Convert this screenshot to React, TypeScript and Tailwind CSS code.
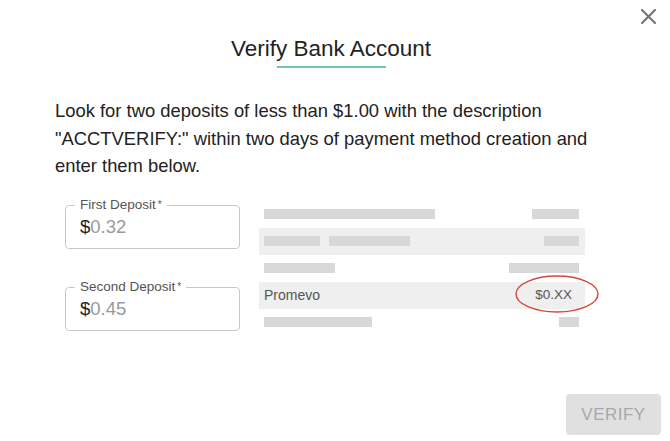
import React from 'react';

type Row = {
  band?: boolean;
  left: number[];
  right?: number;
  label?: string;
  amount?: string;
};

// statement preview rows, widths in px
const rows: Row[] = [
  { left: [171], right: 47 },
  { band: true, left: [56, 81], right: 35 },
  { left: [71], right: 70 },
  { band: true, left: [], label: 'Promevo', amount: '$0.XX' },
  { left: [108], right: 20 },
];

const DepositField = ({ label, value }: { label: string; value: string }) => (
  <div className="relative h-[44px] w-[175px] rounded-[4px] border border-[#c8c8c8] flex items-center pl-[14px]">
    <span className="absolute -top-[9px] left-[9px] bg-white px-[5px] text-[13.5px] leading-[16px] text-[#555]">
      {label}
      <span className="ml-[2px] align-top text-[10px]">*</span>
    </span>
    <span className="text-[18.5px] leading-[22px]">
      <span className="text-[#222]">$</span>
      <span className="text-[#9a9a9a]">{value}</span>
    </span>
  </div>
);

const StatementPreview = () => (
  <div className="w-[326px] flex flex-col">
    {rows.map((row, i) => (
      <div
        key={i}
        className={`relative h-[27px] flex items-center justify-between pl-[5px] pr-[6px] ${row.band ? 'bg-[#efefef]' : ''}`}
      >
        {row.label ? (
          <>
            <span className="text-[14px] text-[#555]">{row.label}</span>
            <span className="pr-[7px] text-[13.5px] text-[#555]">{row.amount}</span>
            <svg className="absolute left-[256px] -top-[7px]" width="84" height="38" viewBox="0 0 84 38">
              <ellipse cx="42" cy="19" rx="41" ry="18" fill="none" stroke="#d4483c" strokeWidth="1.4" />
            </svg>
          </>
        ) : (
          <>
            <div className="flex gap-[9px]">
              {row.left.map((w, j) => (
                <div key={j} className="h-[10px] bg-[#d8d8d8]" style={{ width: w }} />
              ))}
            </div>
            <div className="h-[10px] bg-[#d8d8d8]" style={{ width: row.right }} />
          </>
        )}
      </div>
    ))}
  </div>
);

export default function App() {
  return (
    <div className="relative w-[670px] h-[441px] bg-white flex flex-col font-['Liberation_Sans',Arial,sans-serif] text-[#222]">
      <button className="absolute top-[9px] left-[641px] w-[15px] h-[15px]">
        <svg width="15" height="15" viewBox="0 0 15 15">
          <path d="M1 1 L14 14 M14 1 L1 14" stroke="#777" strokeWidth="2.2" strokeLinecap="square" />
        </svg>
      </button>

      <div className="flex flex-col items-center pt-[36px] pr-[8px]">
        <h1 className="text-[22.5px] leading-[26px] text-[#222]">Verify Bank Account</h1>
        <div className="mt-[4px] h-[2px] w-[109px] bg-[#6fcba6]" />
      </div>

      <p className="mt-[29px] ml-[55px] w-[560px] text-[18.4px] leading-[27.5px] text-[#222]">
        Look for two deposits of less than $1.00 with the description "ACCTVERIFY:" within two days of payment method
        creation and enter them below.
      </p>

      <div className="mt-[21px] ml-[65px] flex gap-[19px]">
        <div className="flex flex-col gap-[38px] pt-[4px]">
          <DepositField label="First Deposit" value="0.32" />
          <DepositField label="Second Deposit" value="0.45" />
        </div>
        <StatementPreview />
      </div>

      <div className="mt-auto flex justify-end pr-[9px] pb-[6px]">
        <button className="h-[41px] w-[95px] rounded-[4px] bg-[#e0e0e0] text-[17px] tracking-[0.5px] text-[#a8a8a8]">
          VERIFY
        </button>
      </div>
    </div>
  );
}
